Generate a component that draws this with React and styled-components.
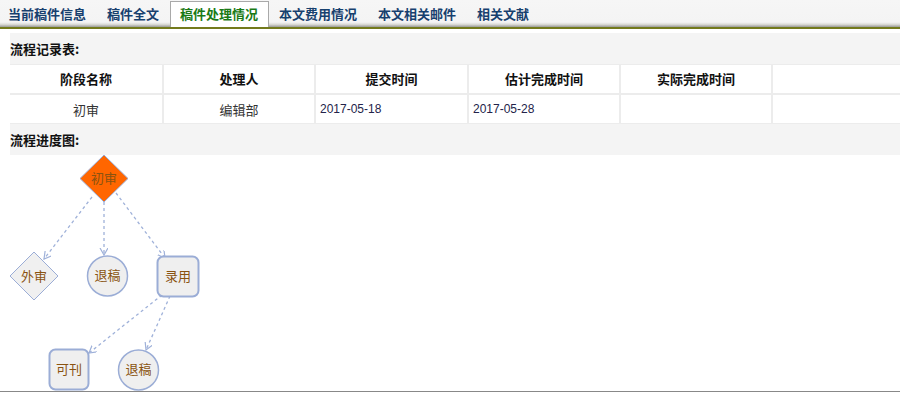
import styled, { createGlobalStyle } from "styled-components";

const GlobalStyle = createGlobalStyle`
  html, body {
    margin: 0;
    padding: 0;
    background: #fff;
    font-family: "Noto Sans CJK SC", "Liberation Sans", sans-serif;
  }
`;

const tabs = ["当前稿件信息", "稿件全文", "稿件处理情况", "本文费用情况", "本文相关邮件", "相关文献"];

const columns = ["阶段名称", "处理人", "提交时间", "估计完成时间", "实际完成时间", ""];
const rows = [["初审", "编辑部", "2017-05-18", "2017-05-28", "", ""]];

const NODE_STROKE = "#9badd6";
const EDGE = "#9fb1d9";
const LABEL = "#8a5310";

function FlowChart() {
  const edges = [
    [92, 42, 44, 104],
    [104, 47, 104, 100],
    [116, 38, 165, 103],
    [162, 140, 89, 198],
    [170, 141, 146, 195],
  ];
  return (
    <svg width="900" height="236" viewBox="0 0 900 236">
      <defs>
        <marker id="arr" markerWidth="10" markerHeight="10" refX="7" refY="4" orient="auto" markerUnits="userSpaceOnUse">
          <path d="M0,0 L7,4 L0,8" fill="none" stroke={EDGE} strokeWidth="1.2" />
        </marker>
      </defs>
      {edges.map(([x1, y1, x2, y2], i) => (
        <line key={i} x1={x1} y1={y1} x2={x2} y2={y2} stroke={EDGE} strokeWidth="1.3" strokeDasharray="3 3" markerEnd="url(#arr)" />
      ))}

      <polygon points="104,0 128,23.5 104,47 80,23.5" fill="#ff6600" stroke={NODE_STROKE} strokeWidth="1" />
      <NodeText x="104" y="28">初审</NodeText>

      <polygon points="34,97 58,121 34,145 10,121" fill="#f0f0f0" stroke={NODE_STROKE} strokeWidth="1" />
      <NodeText x="34" y="126">外审</NodeText>

      <circle cx="107.5" cy="121" r="20" fill="#efefef" stroke={NODE_STROKE} strokeWidth="1.5" />
      <NodeText x="107.5" y="125">退稿</NodeText>

      <rect x="157.5" y="101.5" width="41" height="40" rx="6" fill="#efefef" stroke={NODE_STROKE} strokeWidth="2" />
      <NodeText x="178" y="126">录用</NodeText>

      <rect x="49.5" y="194.5" width="39" height="40" rx="6" fill="#efefef" stroke={NODE_STROKE} strokeWidth="2" />
      <NodeText x="69" y="219">可刊</NodeText>

      <circle cx="138.5" cy="215" r="20" fill="#efefef" stroke={NODE_STROKE} strokeWidth="1.5" />
      <NodeText x="138.5" y="219">退稿</NodeText>
    </svg>
  );
}

function App() {
  return (
    <Page>
      <GlobalStyle />
      <TabBar>
        {tabs.map((t, i) => (
          <Tab key={t} $active={i === 2}>
            {t}
          </Tab>
        ))}
      </TabBar>
      <Content>
        <SectionTitle>流程记录表:</SectionTitle>
        <Table>
          {columns.map((c, i) => (
            <HeadCell key={"h" + i}>{c}</HeadCell>
          ))}
          {rows.map((r) =>
            r.map((v, i) => (
              <Cell key={"c" + i} $date={i >= 2}>
                {v}
              </Cell>
            ))
          )}
        </Table>
        <SectionTitle>流程进度图:</SectionTitle>
      </Content>
      <Diagram>
        <FlowChart />
      </Diagram>
    </Page>
  );
}

const Page = styled.div`
  width: 900px;
  height: 414px;
  overflow: hidden;
  background: #fff;
`;

const TabBar = styled.div`
  display: flex;
  align-items: flex-end;
  height: 27px;
  margin-left: -2.5px;
  background: linear-gradient(to bottom, #f6f6f6 0%, #f4f4f4 82%, #dcdcd8 90%, #9a9a96 100%);
  border-bottom: 2px solid #737a1c;
`;

const Tab = styled.div`
  height: 26px;
  box-sizing: border-box;
  display: flex;
  align-items: center;
  padding: 0 9.5px 3px;
  font-size: 13px;
  font-weight: bold;
  white-space: nowrap;
  color: ${(p) => (p.$active ? "#1a7a16" : "#17406e")};
  background: ${(p) => (p.$active ? "#fff" : "transparent")};
  border: 1px solid ${(p) => (p.$active ? "#a9a9a9" : "transparent")};
  border-bottom: none;
`;

const Content = styled.div`
  margin: 4px 0 0 10px;
  background: #f4f4f4;
`;

const SectionTitle = styled.div`
  height: 31px;
  display: flex;
  align-items: center;
  padding-bottom: 1px;
  box-sizing: border-box;
  font-size: 13px;
  font-weight: bold;
  color: #111;
`;

const Table = styled.div`
  display: grid;
  grid-template-columns: 152px 150px 151px 150px 150px 1fr;
  gap: 2px;
  background: #ececec;
  padding: 1px 0;
`;

const HeadCell = styled.div`
  background: #fff;
  height: 28px;
  display: flex;
  align-items: center;
  justify-content: center;
  padding-bottom: 1px;
  box-sizing: border-box;
  font-size: 13px;
  font-weight: bold;
  color: #111;
`;

const Cell = styled.div`
  background: #fff;
  height: 28px;
  display: flex;
  align-items: center;
  justify-content: ${(p) => (p.$date ? "flex-start" : "center")};
  padding-left: ${(p) => (p.$date ? "4px" : "0")};
  font-family: ${(p) => (p.$date ? '"Liberation Sans", Arial, sans-serif' : '"Noto Sans CJK SC", sans-serif')};
  font-size: ${(p) => (p.$date ? "12px" : "13px")};
  color: ${(p) => (p.$date ? "#23234a" : "#333")};
`;

const Diagram = styled.div`
  height: 236px;
  border-bottom: 1px solid #888;
  background: #fff;
  svg {
    display: block;
  }
`;

const NodeText = styled.text.attrs({ textAnchor: "middle" })`
  font-family: "Noto Sans CJK SC", sans-serif;
  font-size: 13px;
  fill: ${LABEL};
`;

export default App;
